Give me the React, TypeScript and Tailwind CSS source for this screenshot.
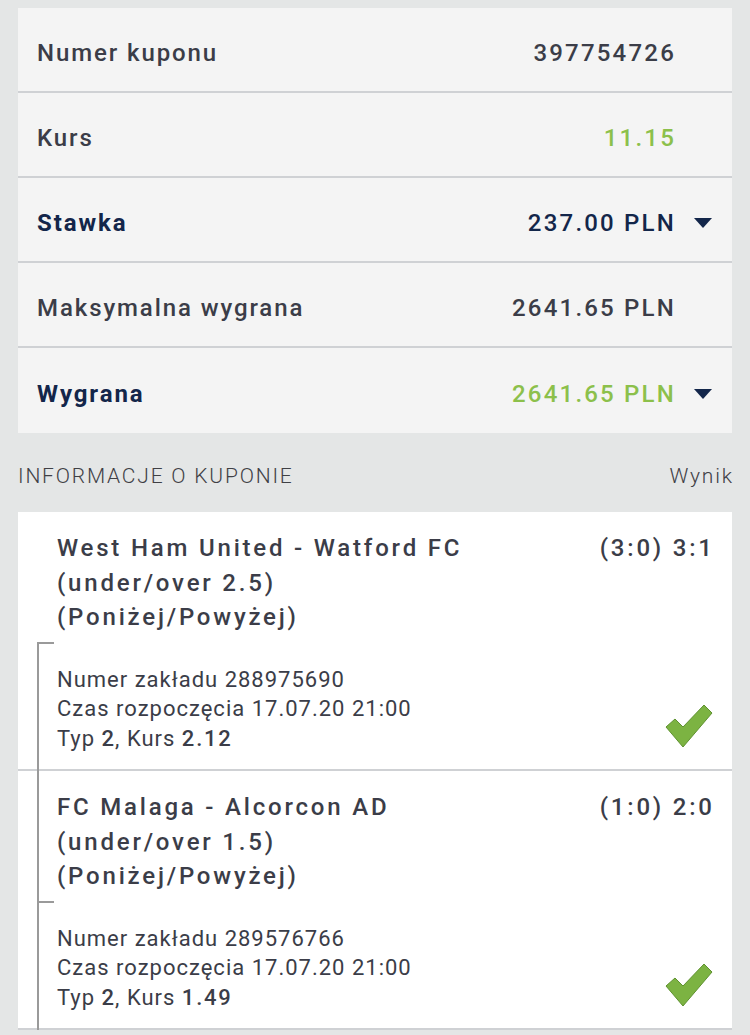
import React from "react";

type Row = { label: string; value: string; strong?: boolean; green?: boolean; caret?: boolean };

const ROWS: Row[] = [
  { label: "Numer kuponu", value: "397754726" },
  { label: "Kurs", value: "11.15", green: true },
  { label: "Stawka", value: "237.00 PLN", strong: true, caret: true },
  { label: "Maksymalna wygrana", value: "2641.65 PLN" },
  { label: "Wygrana", value: "2641.65 PLN", strong: true, green: true, caret: true },
];

type Bet = { match: string; market: string; pick: string; score: string; id: string; start: string; type: string; odds: string };

const BETS: Bet[] = [
  {
    match: "West Ham United - Watford FC",
    market: "(under/over 2.5)",
    pick: "(Poniżej/Powyżej)",
    score: "(3:0) 3:1",
    id: "288975690",
    start: "17.07.20 21:00",
    type: "2",
    odds: "2.12",
  },
  {
    match: "FC Malaga - Alcorcon AD",
    market: "(under/over 1.5)",
    pick: "(Poniżej/Powyżej)",
    score: "(1:0) 2:0",
    id: "289576766",
    start: "17.07.20 21:00",
    type: "2",
    odds: "1.49",
  },
];

function Caret() {
  return (
    <svg width="18" height="10" viewBox="0 0 18 10" className="ml-[20px]">
      <path d="M0 0h18L9 10z" fill="#13264a" />
    </svg>
  );
}

function Check() {
  return (
    <svg width="50" height="48" viewBox="0 0 50 48">
      <path
        d="M2 24 L11 16 L19 24 L40 2 L48 10 L19 44 Z"
        fill="#7cb342"
        stroke="#5f9230"
        strokeWidth="1"
        strokeLinejoin="round"
      />
    </svg>
  );
}

export default function App() {
  return (
    <div
      className="min-h-[1035px] w-[750px] bg-[#e4e6e6] px-[18px] pt-[8px] text-[#3b3d48]"
      style={{ fontFamily: "Roboto, 'Noto Sans', sans-serif" }}
    >
      {/* podsumowanie kuponu */}
      <div className="bg-[#f4f4f4]">
        {ROWS.map((row, i) => (
          <div
            key={row.label}
            className={`flex h-[85px] items-center pl-[19px] pr-[20px] pt-[6px] ${i < ROWS.length - 1 ? "border-b-2 border-[#cfd1d4]" : ""}`}
          >
            <span
              className={`flex-1 text-[24px] tracking-[1.9px] ${row.strong ? "font-bold text-[#13264a]" : "font-medium"}`}
            >
              {row.label}
            </span>
            <span
              className={`mr-[-2px] text-[24px] font-medium tracking-[2.2px] ${row.green ? "text-[#8cc04b]" : row.strong ? "font-bold text-[#13264a]" : ""}`}
            >
              {row.value}
            </span>
            {row.caret ? <Caret /> : <span className="w-[38px]" />}
          </div>
        ))}
      </div>

      <div className="flex h-[79px] items-center justify-between pt-[8px] text-[21px] font-light tracking-[1.8px] text-[#3f4045]">
        <span>INFORMACJE O KUPONIE</span>
        <span className="mr-[-1.8px]">Wynik</span>
      </div>

      {/* lista zakładów */}
      <div className="bg-white">
        {BETS.map((bet, i) => (
          <div key={bet.id} className="relative border-b-2 border-[#cfd1d4] pb-[16px] pl-[39px] pr-[20px] pt-[19px]">
            {i > 0 && <div className="absolute bottom-[-2px] left-[19px] top-0 w-[2px] bg-[#9a9a9a]" />}
            <div className="flex justify-between text-[24px] font-medium leading-[34.5px] tracking-[2.8px]">
              <div>
                <div>{bet.match}</div>
                <div>{bet.market}</div>
                <div>{bet.pick}</div>
              </div>
              <div className="mr-[-2.8px]">{bet.score}</div>
            </div>
            <div className="relative mt-[7px] flex items-end justify-between pt-[23px]">
              <div className="absolute left-[-20px] top-0 h-[2px] w-[17px] bg-[#9a9a9a]" />
              <div className="absolute bottom-[-18px] left-[-20px] top-0 w-[2px] bg-[#9a9a9a]" />
              <div className="text-[22px] font-normal leading-[29.5px] tracking-[1px]">
                <div>Numer zakładu {bet.id}</div>
                <div>Czas rozpoczęcia {bet.start}</div>
                <div>
                  Typ <span className="font-medium">{bet.type}</span>, Kurs{" "}
                  <span className="font-medium tracking-[1.8px]">{bet.odds}</span>
                </div>
              </div>
              <div className="mb-[2px] mr-[-2px]">
                <Check />
              </div>
            </div>
          </div>
        ))}
      </div>
    </div>
  );
}
